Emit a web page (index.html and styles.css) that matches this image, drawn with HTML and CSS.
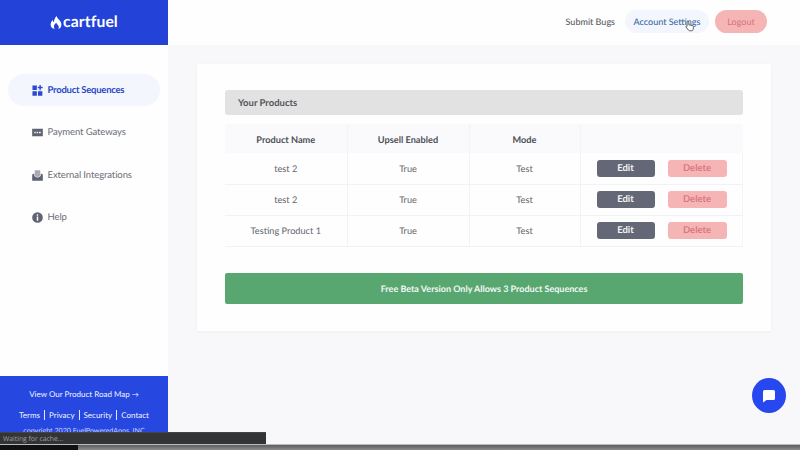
FILE: index.html
```html
<!DOCTYPE html>
<html lang="en">
<head>
<meta charset="utf-8">
<title>cartfuel</title>
<link rel="stylesheet" href="styles.css">
</head>
<body>
<div class="app">
  <aside class="sidebar">
    <div class="brand">
      <svg class="flame" viewBox="0 0 12 14"><path d="M6.800 0C7 2 8.400 2.900 9.800 4.600C11 6.100 11.800 7.500 11.800 9.300C11.800 11.800 10.300 13.500 8.300 14C9.300 12.900 9.300 11.400 8.400 10.200C7.700 9.300 6.700 8.700 6.300 7.300C5 8.300 3.900 9.600 3.800 11.200C3.800 12.200 4.100 13.300 4.700 14C2.100 13.600 .2 11.800 .2 9.300C.2 7.300 1.200 5.500 2.500 4.200C2.700 5.500 3.200 6.300 3.900 6.700C3.700 4.300 4.900 1.800 6.800 0Z"/></svg>
      <span class="brand-name">cartfuel</span>
    </div>
    <nav class="nav">
      <a class="nav-item active">
        <svg class="nav-icon" viewBox="0 0 12 12"><path d="M.5 .5h4.800v5H.5zM.5 6.800h4.800v4.800H.5zM6.500 6.800h4.800v4.800H6.500zM8.100 0h1.500v2h2v1.600h-2v2H8.100v-2H6.300V2h1.800z"/></svg>
        Product Sequences
      </a>
      <a class="nav-item">
        <svg class="nav-icon" viewBox="0 0 12 12"><path fill-rule="evenodd" d="M.2 2h11.600v8H.2zM2.500 5.300h1.500v1.400H2.500zM5 5.300h1.500v1.400H5zM7.500 5.300H9.500v1.400H7.500z"/></svg>
        Payment Gateways
      </a>
      <a class="nav-item">
        <svg class="nav-icon" viewBox="0 0 12 12"><path d="M.2 5L2.500 3.800V6.500L6 8.500 9.500 6.500V3.800L11.800 5V11.800H.2z"/><path class="soft" d="M3 .2h6V6L6 7.800 3 6z"/></svg>
        External Integrations
      </a>
      <a class="nav-item">
        <svg class="nav-icon" viewBox="0 0 12 12"><path fill-rule="evenodd" d="M6 .2a5.800 5.800 0 1 1 0 11.600a5.800 5.800 0 0 1 0-11.600zM5.200 2.500v1.500h1.600V2.500zM5.200 5v4.500h1.600V5z"/></svg>
        Help
      </a>
    </nav>
    <div class="side-foot">
      <div class="roadmap">View Our Product Road Map <span class="arrow">→</span></div>
      <div class="foot-links">
        <span>Terms</span><span>Privacy</span><span>Security</span><span>Contact</span>
      </div>
      <div class="copyright">copyright 2020 FuelPoweredApps, INC</div>
    </div>
  </aside>
  <div class="content">
    <header class="topbar">
      <a class="top-link">Submit Bugs</a>
      <a class="top-link account">Account Settings</a>
      <a class="logout">Logout</a>
    </header>
    <main class="main">
      <section class="card">
        <h2 class="card-title">Your Products</h2>
        <table class="products">
          <thead>
            <tr><th class="c1">Product Name</th><th class="c2">Upsell Enabled</th><th class="c3">Mode</th><th></th></tr>
          </thead>
          <tbody>
            <tr><td>test 2</td><td>True</td><td>Test</td><td><div class="actions"><button class="btn edit">Edit</button><button class="btn delete">Delete</button></div></td></tr>
            <tr><td>test 2</td><td>True</td><td>Test</td><td><div class="actions"><button class="btn edit">Edit</button><button class="btn delete">Delete</button></div></td></tr>
            <tr><td>Testing Product 1</td><td>True</td><td>Test</td><td><div class="actions"><button class="btn edit">Edit</button><button class="btn delete">Delete</button></div></td></tr>
          </tbody>
        </table>
        <div class="limit">Free Beta Version Only Allows 3 Product Sequences</div>
      </section>
    </main>
  </div>
</div>
<div class="strip"><div class="strip-dark"></div></div>
<div class="status">Waiting for cache...</div>
<button class="chat" aria-label="Chat">
  <svg viewBox="0 0 14 14"><path d="M2.500 1h9A1.500 1.500 0 0 1 13 2.500v7A1.500 1.500 0 0 1 11.500 11H4.500L1 13.500V2.500A1.500 1.500 0 0 1 2.500 1z"/></svg>
</button>
<svg class="cursor" viewBox="0 0 12 14"><path d="M3.500 1.200c.7 0 1.100.5 1.100 1.100v3.300l4 .8c1 .2 1.600.9 1.500 1.900l-.4 3c-.1.800-.7 1.400-1.500 1.400H5.500c-.6 0-1-.2-1.400-.7L1.300 8.200c-.5-.6.300-1.600 1.100-1l.1.100V2.300c0-.6.400-1.100 1-1.100z"/></svg>
</body>
</html>
```
FILE: styles.css
```css
* { box-sizing: border-box; }
html, body { margin: 0; height: 100%; }
body {
  width: 800px;
  height: 450px;
  overflow: hidden;
  position: relative;
  display: flex;
  flex-direction: column;
  font-family: Lato, "Open Sans", sans-serif;
  text-rendering: geometricPrecision;
  background: #f8f8fb;
  color: #55575f;
}
.app { height: 444px; display: flex; flex: none; }
.sidebar { width: 168px; flex: none; display: flex; flex-direction: column; background: #fefefe; }
.brand {
  height: 45px;
  background: #2342d8;
  display: flex;
  align-items: center;
  justify-content: center;
  gap: 1px;
  color: #fff;
  padding-bottom: 1px;
}
.flame { width: 12px; height: 13px; fill: #fff; }
.brand-name { font-size: 15.700px; font-weight: 700; letter-spacing: .1px; }
.nav { display: flex; flex-direction: column; padding: 29px 8px 0; gap: 11px; }
.nav-item {
  height: 31.500px;
  display: flex;
  align-items: center;
  gap: 4.500px;
  padding: 1px 0 0 24px;
  border-radius: 16px;
  font-size: 9.500px;
  letter-spacing: -.1px;
  color: #6b6d76;
}
.nav-item.active { background: #f3f6fc; color: #2b48c8; font-weight: 700; letter-spacing: -.25px; }
.nav-icon { width: 11px; height: 11px; fill: #5f6270; flex: none; }
.active .nav-icon { fill: #2b48d0; }
.soft { fill: #a9abb3; }
.side-foot {
  margin-top: auto;
  height: 68px;
  background: #2647e0;
  color: #f1f3ff;
  font-size: 8px;
  text-align: center;
  overflow: hidden;
  padding-top: 13px;
}
.roadmap { line-height: 11px; }
.arrow { font-size: 7px; }
.foot-links { display: flex; justify-content: center; margin-top: 9px; line-height: 10px; }
.foot-links span { padding: 0 4px; border-left: 1px solid #e6e9ff; }
.foot-links span:first-child { border-left: 0; }
.copyright { margin-top: 6px; font-size: 7.100px; color: #c9d1fb; white-space: nowrap; }
.content { flex: 1; display: flex; flex-direction: column; min-width: 0; }
.topbar {
  height: 45px;
  background: #fefefe;
  display: flex;
  align-items: center;
  justify-content: flex-end;
  padding: 0 33px 3px 0;
  font-size: 9px;
  flex: none;
}
.top-link { color: #5a5c64; font-weight: 500; }
.account {
  margin-left: 10px;
  height: 23px;
  width: 84px;
  display: flex;
  align-items: center;
  justify-content: center;
  border-radius: 12px;
  background: #f3f6fc;
  color: #3b6ba5;
}
.logout {
  margin-left: 6px;
  height: 23px;
  width: 52px;
  display: flex;
  align-items: center;
  justify-content: center;
  border-radius: 12px;
  background: #f5b5b5;
  color: #d9737a;
}
.main { flex: 1; padding: 19px 29px 0; }
.card {
  height: 267px;
  background: #fefefe;
  padding: 26px 28px 0;
  box-shadow: 0 1px 3px rgba(60, 60, 90, .05);
}
.card-title {
  margin: 0;
  height: 25px;
  background: #e2e2e2;
  border-radius: 3px;
  padding-left: 13px;
  font-size: 9.500px;
  font-weight: 700;
  line-height: 27px;
  color: #55565b;
}
.products {
  margin-top: 9px;
  width: 100%;
  border-collapse: collapse;
  table-layout: fixed;
  font-size: 9.200px;
  color: #62646b;
}
.products th {
  height: 29px;
  padding: 1px 0 0;
  background: #fafafc;
  font-weight: 700;
  color: #4e5057;
  border-right: 1px solid #f2f3f7;
}
.products th:last-child { border-right: 0; }
.products td {
  height: 31px;
  padding: 0;
  text-align: center;
  border-right: 1px solid #f2f3f7;
  border-bottom: 1px solid #f0f2f6;
}
.products td:last-child { border-right: 1px solid #f5f5f8; }
.c1 { width: 122px; }
.c2 { width: 122px; }
.c3 { width: 111px; }
.actions { display: flex; gap: 13px; padding-left: 16px; }
.btn {
  width: 58px;
  height: 17px;
  padding: 0;
  border: 0;
  border-radius: 3px;
  font: 700 9.500px Lato, sans-serif;
  text-rendering: geometricPrecision;
}
.edit { background: #646876; color: #f4f4f6; }
.delete { width: 59px; background: #f5b5b5; color: #da7a80; }
.limit {
  margin-top: 26px;
  height: 31px;
  background: #58a770;
  border-radius: 2px;
  color: #f3f8f4;
  font-size: 9px;
  font-weight: 700;
  display: flex;
  align-items: center;
  justify-content: center;
}
.strip {
  flex: 1;
  background: linear-gradient(#5d5d5d, #8c8c8c);
  border-top: 1px solid #bbb;
}
.strip-dark { width: 78px; height: 100%; background: #111; }
.status {
  position: absolute;
  left: 0;
  top: 432px;
  width: 266px;
  height: 12px;
  padding-left: 3px;
  background: #333436;
  border-top: 1px solid #454545;
  color: #a0a0a0;
  font: 6.800px/11px "Open Sans", sans-serif;
}
.chat {
  position: absolute;
  left: 752px;
  top: 378px;
  width: 34px;
  height: 35px;
  padding: 0;
  border: 0;
  border-radius: 50%;
  background: #2648ee;
  display: flex;
  align-items: center;
  justify-content: center;
}
.chat svg { width: 14px; height: 14px; fill: #fff; }
.cursor {
  position: absolute;
  left: 685px;
  top: 20px;
  width: 10px;
  height: 12px;
  fill: #fff;
  stroke: #444;
  stroke-width: 1;
}
```
